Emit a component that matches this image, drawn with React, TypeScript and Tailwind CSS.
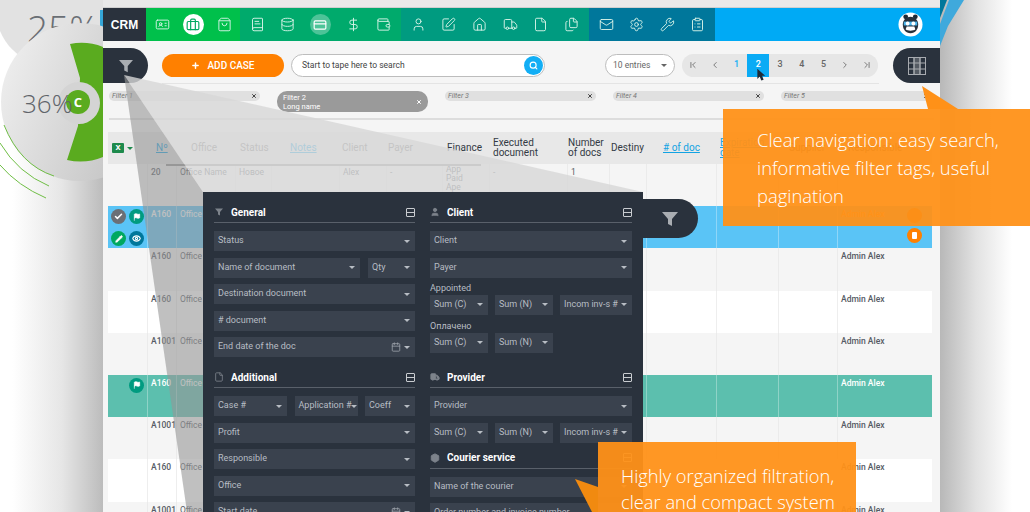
import React from "react";
import {
  IdCard, Briefcase, ShoppingBag, BookText, Database, CreditCard, DollarSign, Wallet, User, SquarePen, Home,
  Truck, File, Files, Mail, Settings, Wrench, ClipboardList, Plus, Search, ChevronFirst, ChevronLast,
  ChevronLeft, ChevronRight, Check, Flag, Pencil, Eye, X, Calendar, Package,
} from "lucide-react";

const navGroups = [
  { bg: "bg-[#00c04b]", width: "w-[94px]", icons: [IdCard, Briefcase, ShoppingBag] },
  { bg: "bg-[#00aa6c]", width: "w-[161px]", icons: [BookText, Database, CreditCard, DollarSign, Wallet] },
  { bg: "bg-[#009b80]", width: "w-[188px]", icons: [User, SquarePen, Home, Truck, File, Files] },
  { bg: "bg-[#00779b]", width: "w-[126px]", icons: [Mail, Settings, Wrench, ClipboardList] },
];

const columns = "grid grid-cols-[40px_29px_59px_36px_68px_47px_56px_47px_78px_42px_37px_70px_62px_59px_94px]";

const headers = [
  { label: "", pad: "" },
  { label: "Nº", link: true, pad: "pl-[8px]" },
  { label: "Office", pad: "pl-[14px]" },
  { label: "Status", pad: "pl-[4px]" },
  { label: "Notes", link: true, pad: "pl-[18px]" },
  { label: "Client", pad: "pl-[2px]" },
  { label: "Payer", pad: "pl-[1px]" },
  { label: "Finance", dark: true, pad: "pl-[4px]" },
  { label: "Executed document", dark: true, pad: "pl-[3px]" },
  { label: "Number of docs", dark: true, pad: "" },
  { label: "Destiny", dark: true, pad: "pl-[1px]" },
  { label: "# of doc", link: true, pad: "pl-[16px]" },
  { label: "Expiration date", link: true, pad: "pl-[3px]" },
  { label: "Supplier", dark: true, pad: "pl-[10px]" },
  { label: "Responsible", dark: true, pad: "pl-[10px]" },
];

const rows = [
  { tone: "plain", id: "20", admin: "" },
  { tone: "blue", id: "A160", admin: "Admin Alex" },
  { tone: "plain", id: "A160", admin: "Admin Alex" },
  { tone: "white", id: "A160", admin: "Admin Alex" },
  { tone: "plain", id: "A1001", admin: "Admin Alex" },
  { tone: "teal", id: "A160", admin: "Admin Alex" },
  { tone: "plain", id: "A1001", admin: "Admin Alex" },
  { tone: "white", id: "A160", admin: "Admin Alex" },
  { tone: "plain", id: "A1001", admin: "Admin Alex" },
];

const rowStyle = (tone: string) => {
  switch (tone) {
    case "blue":
      return { row: "bg-[#5ac4f6]", cell: "border-[#8fd6f8]", text: "text-white" };
    case "teal":
      return { row: "bg-[#5cbfae]", cell: "border-[#8fd3c7]", text: "text-white" };
    case "white":
      return { row: "bg-white", cell: "border-[#eeeeee]", text: "text-[#555b64]" };
    default:
      return { row: "bg-[#f5f5f5]", cell: "border-[#ebebeb]", text: "text-[#555b64]" };
  }
};

const Round = ({ bg, children }: { bg: string; children: React.ReactNode }) => (
  <div className={`w-[15px] h-[15px] rounded-full flex items-center justify-center text-white ${bg}`}>{children}</div>
);

const Caret = () => <div className="w-0 h-0 border-x-[3px] border-x-transparent border-t-[3px] border-t-[#b8bdc4] shrink-0" />;

const Field = ({ label, width = "w-full", calendar }: { label: string; width?: string; calendar?: boolean }) => (
  <div className={`h-[20px] bg-[#3a424e] flex items-center justify-between pl-[4px] pr-[5px] shrink-0 ${width}`}>
    <span className="text-[9px] text-[#b8bdc4] whitespace-nowrap">{label}</span>
    <div className="flex items-center gap-[3px]">
      {calendar && <Calendar size={10} className="text-[#9aa0a8]" />}
      <Caret />
    </div>
  </div>
);

const Heading = ({ icon, title }: { icon: React.ReactNode; title: string }) => (
  <div className="h-[18px] border-b border-[#59606a] flex items-center justify-between pb-[3px] mb-[8px] shrink-0">
    <div className="flex items-center gap-[7px]">
      <span className="w-[10px] flex justify-center text-[#7d838b]">{icon}</span>
      <span className="text-[10px] font-bold text-white">{title}</span>
    </div>
    <div className="w-[9px] h-[9px] border border-[#c9ccd0] rounded-[1px] flex items-center">
      <div className="w-full h-px bg-[#c9ccd0]" />
    </div>
  </div>
);

const FunnelIcon = ({ className }: { className: string }) => (
  <svg viewBox="0 0 16 16" className={className} fill="currentColor">
    <path d="M0 1h16l-6 7v7l-4-2V8z" />
  </svg>
);

const ColumnsIcon = () => (
  <svg viewBox="0 0 18 18" className="w-[18px] h-[18px]" fill="none" stroke="#a8abb0" strokeWidth="1">
    <rect x="0.5" y="0.5" width="17" height="17" />
    <path d="M6 0.5v17M12 0.5v17M0.5 6h17M0.5 12h17" />
    <rect x="6" y="0.5" width="6" height="17" fill="#a8abb0" fillOpacity="0.35" />
  </svg>
);

const FilterTag = ({ label }: { label: string }) => (
  <div className="w-[151px] h-[10px] rounded-full bg-[#e0e0e0] flex items-center justify-between px-[3px] shrink-0">
    <span className="text-[7px] italic text-[#777777]">{label}</span>
    <X size={6} strokeWidth={4} className="text-[#444444]" />
  </div>
);

const Avatar = () => (
  <svg viewBox="0 0 26 26" className="w-[25px] h-[25px]">
    <circle cx="13" cy="13" r="12.5" fill="#ffffff" />
    <circle cx="8" cy="5" r="2.5" fill="#1f2a36" />
    <circle cx="18" cy="5" r="2.5" fill="#1f2a36" />
    <path d="M5 13c0-5 4-8 8-8s8 3 8 8-3 9-8 9-8-4-8-9z" fill="#27313c" />
    <path d="M6 10h14v4H6z" fill="#4ab4ea" />
    <circle cx="10" cy="12" r="2" fill="#ffffff" />
    <circle cx="16" cy="12" r="2" fill="#ffffff" />
    <path d="M8 18c2 2 8 2 10 0l-1-3H9z" fill="#ffffff" />
  </svg>
);

const LeftDecor = () => (
  <svg viewBox="0 0 103 512" className="w-[103px] h-[512px] shrink-0">
    <defs>
      <linearGradient id="side" x1="0" x2="1" y1="0" y2="0">
        <stop offset="0.12" stopColor="#ffffff" />
        <stop offset="0.6" stopColor="#e6e6e6" />
        <stop offset="1" stopColor="#bcbcbc" />
      </linearGradient>
      <linearGradient id="disc" x1="0" x2="1" y1="0" y2="0.4">
        <stop offset="0" stopColor="#f2f2f2" />
        <stop offset="1" stopColor="#c4c4c4" />
      </linearGradient>
    </defs>
    <rect width="103" height="512" fill="url(#side)" />
    <circle cx="52" cy="10" r="56" fill="#e2e2e2" />
    <text x="27" y="42" fontSize="37" fontFamily="'Open Sans', sans-serif" fontWeight="300" fill="#6a6f75">25%</text>
    <path d="M100 10h3v18h-3z" fill="#35a6d8" />
    <circle cx="80" cy="102" r="79" fill="url(#disc)" />
    <path d="M70 44A59 59 0 0 1 103 47V157A59 59 0 0 1 67 160L78 126 80 78Z" fill="#5aab1f" />
    <circle cx="79" cy="103" r="21" fill="#d4d4d4" />
    <circle cx="78" cy="102" r="12" fill="#5aab1f" />
    <text x="78" y="107" fontSize="13" fontWeight="700" fontFamily="'Open Sans', sans-serif" textAnchor="middle" fill="#ffffff">C</text>
    <text x="22" y="113" fontSize="26" fontFamily="'Open Sans', sans-serif" fontWeight="300" fill="#5f646a">36%</text>
    <path d="M4 125Q20 165 54 176" fill="none" stroke="#6fbe45" strokeWidth="1" />
    <path d="M0 143Q18 173 49 186" fill="none" stroke="#6fbe45" strokeWidth="1" />
    <path d="M0 165Q18 186 46 198" fill="none" stroke="#6fbe45" strokeWidth="1" />
  </svg>
);

const App = () => {
  return (
    <div className="relative w-[1030px] h-[512px] overflow-hidden bg-white flex font-[Roboto,sans-serif]">
      <LeftDecor />

      <div className="w-[837px] h-[512px] shrink-0 bg-[#f5f5f5] flex flex-col overflow-hidden">
        <div className="h-[8px] bg-[#e9e9e9] border-b border-[#cfcfcf] shrink-0" />

        <div className="h-[33px] flex bg-[#00aaf5] shrink-0">
          <div className="w-[43px] bg-[#2a323d] flex items-center justify-center text-white font-bold text-[12px] font-['Liberation_Sans',sans-serif]">
            CRM
          </div>
          {navGroups.map((group) => (
            <div key={group.bg} className={`flex items-center justify-around px-[2px] ${group.bg} ${group.width}`}>
              {group.icons.map((Icon, i) =>
                Icon === Briefcase ? (
                  <div key={i} className="w-[21px] h-[21px] rounded-full bg-white flex items-center justify-center">
                    <Icon size={14} className="text-[#00a860]" />
                  </div>
                ) : Icon === CreditCard ? (
                  <div key={i} className="w-[21px] h-[21px] rounded-full bg-[#4dc398] flex items-center justify-center">
                    <Icon size={14} className="text-white" />
                  </div>
                ) : (
                  <Icon key={i} size={15} strokeWidth={1.5} className="text-[#d8f3e8]" />
                )
              )}
            </div>
          ))}
          <div className="flex-1 flex items-center justify-end pr-[17px]">
            <Avatar />
          </div>
        </div>

        <div className="h-[43px] pt-[7px] flex items-start shrink-0">
          <div className="w-[45px] h-[35px] bg-[#2a323d] rounded-r-full flex items-center justify-center shrink-0">
            <FunnelIcon className="w-[14px] h-[14px] text-[#a9adb2]" />
          </div>
          <div className="flex-1 h-[36px] border-b border-[#e4e4e4] flex items-center ml-[14px] pb-[1px]">
            <button className="w-[122px] h-[23px] rounded-full bg-[#ff8000] text-white text-[10px] font-medium flex items-center justify-center gap-[7px] shrink-0">
              <Plus size={9} strokeWidth={4} />
              <span>ADD CASE</span>
            </button>
            <div className="w-[254px] h-[23px] ml-[7px] rounded-full bg-white border border-[#bdbdbd] flex items-center justify-between pl-[10px] pr-[1px] shrink-0">
              <span className="text-[8.5px] text-[#444444]">Start to tape here to search</span>
              <div className="w-[19px] h-[19px] rounded-full bg-[#12aef5] flex items-center justify-center">
                <Search size={9} strokeWidth={3} className="text-white" />
              </div>
            </div>
            <div className="w-[70px] h-[23px] ml-[60px] rounded-full bg-white border border-[#bdbdbd] flex items-center justify-between px-[7px] shrink-0">
              <span className="text-[8.5px] text-[#666666]">10 entries</span>
              <div className="w-0 h-0 border-x-[3px] border-x-transparent border-t-[3px] border-t-[#666666]" />
            </div>
            <div className="w-[196px] h-[23px] ml-[7px] rounded-full bg-[#e6e6e6] overflow-hidden flex text-[9px] text-[#666666] font-medium shrink-0">
              <div className="flex-1 flex items-center justify-center"><ChevronFirst size={10} /></div>
              <div className="flex-1 flex items-center justify-center"><ChevronLeft size={10} /></div>
              <div className="flex-1 flex items-center justify-center text-[#12aef5]">1</div>
              <div className="flex-1 flex items-center justify-center bg-[#0aabf5] text-white">2</div>
              <div className="flex-1 flex items-center justify-center">3</div>
              <div className="flex-1 flex items-center justify-center">4</div>
              <div className="flex-1 flex items-center justify-center">5</div>
              <div className="flex-1 flex items-center justify-center"><ChevronRight size={10} /></div>
              <div className="flex-1 flex items-center justify-center"><ChevronLast size={10} /></div>
            </div>
          </div>
          <div className="w-[47px] h-[35px] ml-[14px] bg-[#2a323d] rounded-l-full flex items-center justify-center shrink-0">
            <ColumnsIcon />
          </div>
        </div>

        <div className="h-[36px] shrink-0 mx-[6px] border-b-2 border-[#dddddd] pt-[7px] flex items-start gap-[17px]">
          <FilterTag label="Filter 1" />
          <div className="w-[151px] h-[21px] rounded-[10px] bg-[#9a9a9a] flex items-center justify-between px-[6px] shrink-0">
            <span className="text-[7.5px] leading-[9px] text-white">Filter 2<br />Long name</span>
            <X size={6} strokeWidth={4} className="text-white" />
          </div>
          <FilterTag label="Filter 3" />
          <FilterTag label="Filter 4" />
          <FilterTag label="Filter 5" />
        </div>

        <div className="relative mt-[12px] ml-[5px] w-[824px] shrink-0">
          <div className={`${columns} h-[32px] bg-[#e8e8e8] text-[10px] leading-[10px] text-[#777777]`}>
            {headers.map((h, i) => (
              <div key={i} className={`flex items-center ${h.pad} ${h.dark ? "text-[#333a44]" : ""}`}>
                {i === 0 ? (
                  <div className="flex items-center gap-[3px] pl-[4px]">
                    <div className="w-[12px] h-[10px] bg-[#1e8a4c] rounded-[1px] flex items-center justify-center text-white text-[8px] font-bold">X</div>
                    <div className="w-0 h-0 border-x-[3px] border-x-transparent border-t-[3px] border-t-[#1e8a4c]" />
                  </div>
                ) : (
                  <span className={h.link ? "text-[#12a3e3] underline" : ""}>{h.label}</span>
                )}
              </div>
            ))}
          </div>
          <div className="absolute left-[58px] top-[32px] w-[315px] h-[2px] bg-[#999999]" />

          {rows.map((row, r) => {
            const s = rowStyle(row.tone);
            return (
              <div key={r} className={`${columns} h-[42.2px] text-[8.5px] leading-[10px] ${s.row} ${s.text}`}>
                <div className={`border-r ${s.cell} flex justify-center pt-[3px]`}>
                  {row.tone === "blue" && (
                    <div className="grid grid-cols-2 gap-x-[3px] gap-y-[5px]">
                      <Round bg="bg-[#6b6f75]"><Check size={9} strokeWidth={4} /></Round>
                      <Round bg="bg-[#009b80]"><Flag size={8} fill="currentColor" /></Round>
                      <Round bg="bg-[#00a860]"><Pencil size={8} fill="currentColor" /></Round>
                      <Round bg="bg-[#00779b]"><Eye size={9} strokeWidth={3} /></Round>
                    </div>
                  )}
                  {row.tone === "teal" && (
                    <div className="w-full flex justify-end pr-[3px]">
                      <Round bg="bg-[#009b80]"><Flag size={8} fill="currentColor" /></Round>
                    </div>
                  )}
                </div>
                <div className={`border-r ${s.cell} pl-[3px] pt-[3px] font-medium`}>{row.id}</div>
                <div className={`border-r ${s.cell} pl-[3px] pt-[3px] whitespace-nowrap overflow-hidden`}>
                  {r === 0 ? "Office Name" : "Office"}
                </div>
                <div className={`border-r ${s.cell} pl-[3px] pt-[3px]`}>{r === 0 ? "Новое" : ""}</div>
                <div className={`border-r ${s.cell}`} />
                <div className={`border-r ${s.cell} pl-[3px] pt-[3px]`}>{r === 0 ? "Alex" : ""}</div>
                <div className={`border-r ${s.cell} pl-[3px] pt-[3px]`}>{r === 0 ? "-" : ""}</div>
                <div className={`border-r ${s.cell} pl-[3px] pt-[1px] leading-[9px] overflow-hidden`}>
                  {r === 0 && (<>App<br />Paid<br />Ape</>)}
                </div>
                <div className={`border-r ${s.cell} pl-[3px] pt-[3px]`}>{r === 0 ? "-" : ""}</div>
                <div className={`border-r ${s.cell} pl-[3px] pt-[3px]`}>{r === 0 ? "1" : ""}</div>
                <div className={`border-r ${s.cell}`} />
                <div className={`border-r ${s.cell}`} />
                <div className={`border-r ${s.cell}`} />
                <div className={`border-r ${s.cell}`} />
                <div className={`relative pl-[3px] pt-[3px] font-medium ${row.tone === "blue" ? "text-[#ff9118]" : ""}`}>
                  {row.admin}
                  {row.tone === "blue" && (
                    <>
                      <div className="absolute right-[10px] top-[2px] w-[15px] h-[15px] rounded-full bg-[#b86400]" />
                      <div className="absolute right-[10px] top-[22px] w-[15px] h-[15px] rounded-full bg-[#ff8000] flex items-center justify-center">
                        <div className="w-[5px] h-[7px] rounded-[1px] bg-white" />
                      </div>
                    </>
                  )}
                </div>
              </div>
            );
          })}
        </div>
      </div>

      <div className="relative flex-1 h-[512px] bg-gradient-to-r from-[#b8b8b8] via-[#e2e2e2] via-40% to-white to-80%">
        <svg viewBox="0 0 30 50" className="absolute left-0 top-0 w-[30px] h-[50px]">
          <path d="M0 46V24L9 0H24L8 26 0 46Z" fill="#3fa9dc" />
          <path d="M0 18L7 0H0Z" fill="#00779b" />
        </svg>
      </div>

      <svg viewBox="0 0 1030 512" className="absolute left-0 top-0 w-[1030px] h-[512px] pointer-events-none">
        <polygon points="124,75 643,192 203,192" fill="rgba(215,215,215,0.8)" />
        <polygon points="124,75 203,192 203,512 187,512" fill="rgba(150,150,150,0.6)" />
      </svg>

      <div className="absolute left-[203px] top-[192px] w-[440px] h-[340px] bg-[#2a323d] px-[11px] pt-[13px] grid grid-cols-[201px_202px] grid-rows-[165px_1fr] gap-x-[15px]">
        <div className="flex flex-col">
          <Heading icon={<FunnelIcon className="w-[8px] h-[8px]" />} title="General" />
          <div className="flex flex-col gap-[6.5px]">
            <Field label="Status" />
            <div className="flex justify-between">
              <Field label="Name of document" width="w-[146px]" />
              <Field label="Qty" width="w-[47px]" />
            </div>
            <Field label="Destination document" />
            <Field label="# document" />
            <Field label="End date of the doc" calendar />
          </div>
        </div>

        <div className="flex flex-col">
          <Heading icon={<User size={10} fill="currentColor" />} title="Client" />
          <div className="flex flex-col gap-[6.5px]">
            <Field label="Client" />
            <Field label="Payer" />
          </div>
          <div className="text-[9px] leading-[11px] text-[#b8bdc4] mt-[5px] mb-[1px]">Appointed</div>
          <div className="flex gap-[7px]">
            <Field label="Sum (C)" width="w-[58px]" />
            <Field label="Sum (N)" width="w-[58px]" />
            <Field label="Incom inv-s #" width="w-[72px]" />
          </div>
          <div className="text-[9px] leading-[11px] text-[#b8bdc4] mt-[6px] mb-[1px]">Оплачено</div>
          <div className="flex gap-[7px]">
            <Field label="Sum (C)" width="w-[58px]" />
            <Field label="Sum (N)" width="w-[58px]" />
          </div>
        </div>

        <div className="flex flex-col">
          <Heading icon={<File size={10} />} title="Additional" />
          <div className="flex flex-col gap-[6.5px]">
            <div className="flex justify-between">
              <Field label="Case #" width="w-[73px]" />
              <Field label="Application #" width="w-[63px]" />
              <Field label="Coeff" width="w-[50px]" />
            </div>
            <Field label="Profit" />
            <Field label="Responsible" />
            <Field label="Office" />
            <Field label="Start date" calendar />
          </div>
        </div>

        <div className="flex flex-col">
          <Heading icon={<Truck size={10} fill="currentColor" />} title="Provider" />
          <div className="flex flex-col gap-[6.5px]">
            <Field label="Provider" />
            <div className="flex gap-[7px]">
              <Field label="Sum (C)" width="w-[58px]" />
              <Field label="Sum (N)" width="w-[58px]" />
              <Field label="Incom inv-s #" width="w-[72px]" />
            </div>
          </div>
          <div className="mt-[8px]">
            <Heading icon={<Package size={10} fill="currentColor" />} title="Courier service" />
          </div>
          <div className="flex flex-col gap-[6.5px]">
            <Field label="Name of the courier" />
            <Field label="Order number and invoice number" />
          </div>
        </div>
      </div>

      <div className="absolute left-[643px] top-[199px] w-[55px] h-[39px] bg-[#2a323d] rounded-r-full flex items-center justify-center pr-[1px]">
        <FunnelIcon className="w-[16px] h-[16px] text-[#a9adb2]" />
      </div>

      <svg viewBox="0 0 14 16" className="absolute left-[755px] top-[68px] w-[11px] h-[14px]">
        <path d="M3 0v13l3-3 2 5 3-1-2-5h4z" fill="#1f2a36" />
      </svg>

      <svg viewBox="0 0 1030 512" className="absolute left-0 top-0 w-[1030px] h-[512px] pointer-events-none">
        <polygon points="922,86 958,109 928,109" fill="#ff9118" />
        <polygon points="575,479 598,487 598,512 592,512" fill="#f18a10" />
      </svg>

      <div className="absolute left-[723px] top-[109px] w-[307px] h-[117px] bg-[#ff9118]/95 pl-[34px] pt-[17px] pr-[20px] text-[18.4px] leading-[28px] font-light text-white font-['Open_Sans',sans-serif]">
        Clear navigation: easy search, informative filter tags, useful pagination
      </div>

      <div className="absolute left-[598px] top-[442px] w-[258px] h-[70px] overflow-hidden bg-[#ff9118]/95 pl-[23px] pt-[21px] text-[18.3px] leading-[26px] font-light text-white font-['Open_Sans',sans-serif]">
        Highly organized filtration,<br />clear and compact system
      </div>
    </div>
  );
};

export default App;
